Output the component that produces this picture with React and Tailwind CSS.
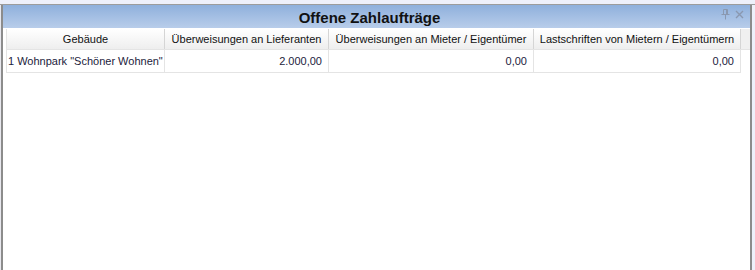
import React from "react";

const font = { fontFamily: '"Liberation Sans", Arial, sans-serif' };

export default function App() {
  return (
    <div className="w-[755px] h-[270px] bg-[#eef0fa] flex flex-col overflow-hidden" style={font}>
      <div className="h-[5px] shrink-0 bg-[#eef0fa] border-b border-[#9c9c9c]" />
      <div className="flex flex-1 min-h-0">
        <div className="w-px bg-[#e8e8ee]" />
        <div className="w-[2px] bg-[#8c8c8c]" />
        <div className="flex-1 flex flex-col bg-white min-w-0">
          <div className="h-[23px] shrink-0 bg-gradient-to-b from-[#8fb0dc] to-[#b8cdea] flex items-center relative">
            <div className="flex-1 text-center text-[15px] font-bold text-[#111] leading-none pt-[2px] pr-[14px] whitespace-nowrap">
              Offene Zahlaufträge
            </div>
            <div className="absolute right-[6px] top-[4px] flex items-center gap-[5px]">
              <svg width="9" height="11" viewBox="0 0 9 11" fill="none" stroke="#8a98b0" strokeWidth="1">
                <path d="M2.5 0.5h4M2.5 0.5v5M6.5 0.5v5M5.5 0.5v5M0.5 5.5h8M4.5 5.5v5" />
              </svg>
              <svg width="9" height="9" viewBox="0 0 9 9" stroke="#8a98b0" strokeWidth="1.4">
                <path d="M1 1l7 7M8 1l-7 7" />
              </svg>
            </div>
          </div>
          <div className="pl-[3px] pt-[1px] flex-1">
            <div className="flex border-l border-[#e4e4e4] h-[21px] text-[11px] text-[#111] bg-gradient-to-b from-white to-[#eeeeee] border-b border-[#dcdcdc] whitespace-nowrap">
              <div className="w-[158px] flex items-center justify-center pt-px border-r border-[#d5d5d5]">Gebäude</div>
              <div className="w-[164px] flex items-center justify-center pt-px border-r border-[#d5d5d5]">Überweisungen an Lieferanten</div>
              <div className="w-[205px] flex items-center justify-center pt-px border-r border-[#d5d5d5]">Überweisungen an Mieter / Eigentümer</div>
              <div className="w-[207px] flex items-center justify-center pt-px border-r border-[#d5d5d5]">Lastschriften von Mietern / Eigentümern</div>
              <div className="flex-1 bg-[#f0f0f0]" />
            </div>
            <div className="flex border-l border-[#e4e4e4] h-[23px] text-[11px] text-[#1c1c3c] border-b border-[#e4e4e4] w-[735px] whitespace-nowrap">
              <div className="w-[158px] flex items-center pl-[1px] border-r border-[#e4e4e4]">1 Wohnpark "Schöner Wohnen"</div>
              <div className="w-[164px] flex items-center justify-end pr-[6px] border-r border-[#e4e4e4]">2.000,00</div>
              <div className="w-[205px] flex items-center justify-end pr-[6px] border-r border-[#e4e4e4]">0,00</div>
              <div className="w-[207px] flex items-center justify-end pr-[6px] border-r border-[#e4e4e4]">0,00</div>
            </div>
          </div>
        </div>
        <div className="w-[2px] bg-[#8c8c8c]" />
        <div className="w-[3px] bg-[#eef0fa]" />
      </div>
    </div>
  );
}
